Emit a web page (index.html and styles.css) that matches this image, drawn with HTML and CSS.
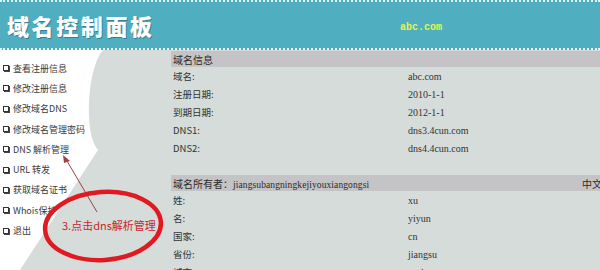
FILE: index.html
```html
<!DOCTYPE html>
<html lang="zh-CN">
<head>
    <meta charset="UTF-8">
    <title>域名控制面板</title>
    <link rel="stylesheet" href="styles.css">
</head>
<body>
    <div class="top">
        <h1>域名控制面板</h1>
        <span class="site">abc.com</span>
    </div>
    <div class="main">
        <div class="menu">
            <ul>
                <li><i class="box"></i>查看注册信息</li>
                <li><i class="box"></i>修改注册信息</li>
                <li><i class="box"></i>修改域名DNS</li>
                <li><i class="box"></i>修改域名管理密码</li>
                <li><i class="box"></i>DNS 解析管理</li>
                <li><i class="box"></i>URL 转发</li>
                <li><i class="box"></i>获取域名证书</li>
                <li><i class="box"></i>Whois保护</li>
                <li><i class="box"></i>退出</li>
            </ul>
        </div>
        <div class="content">
            <table>
                <tr class="bar"><td colspan="2">域名信息</td></tr>
                <tr><td class="label">域名:</td><td class="value">abc.com</td></tr>
                <tr><td class="label">注册日期:</td><td class="value">2010-1-1</td></tr>
                <tr><td class="label">到期日期:</td><td class="value">2012-1-1</td></tr>
                <tr><td class="label">DNS1:</td><td class="value">dns3.4cun.com</td></tr>
                <tr><td class="label">DNS2:</td><td class="value">dns4.4cun.com</td></tr>
                <tr><td colspan="2"></td></tr>
                <tr class="bar">
                    <td colspan="2">
                        <div class="bar-row">
                            <span>域名所有者：<span class="owner">jiangsubangningkejiyouxiangongsi</span></span>
                            <span>中文信息</span>
                        </div>
                    </td>
                </tr>
                <tr><td class="label">姓:</td><td class="value">xu</td></tr>
                <tr><td class="label">名:</td><td class="value">yiyun</td></tr>
                <tr><td class="label">国家:</td><td class="value">cn</td></tr>
                <tr><td class="label">省份:</td><td class="value">jiangsu</td></tr>
                <tr><td class="label">城市:</td><td class="value">suzhou</td></tr>
            </table>
        </div>

        <!-- hand drawn note over the page -->
        <svg class="note" width="200" height="220" viewBox="0 0 200 220">
            <line x1="97" y1="162" x2="67" y2="111" stroke="#9a4444" stroke-width="1"/>
            <polygon points="63,105 70,111 64,113" fill="#9a4444"/>
            <ellipse cx="103" cy="176" rx="58" ry="34" transform="rotate(-4 103 176)"
                     fill="none" stroke="#e01a22" stroke-width="4.5"/>
            <text x="62" y="180" class="note-text">3.点击dns解析管理</text>
        </svg>
    </div>
</body>
</html>
```

FILE: styles.css
```css
body {
    margin: 0;
    width: 600px;
    height: 270px;
    overflow: hidden;
    background-color: #d5dcd9;
    font-family: "Noto Sans CJK SC", "Liberation Sans", sans-serif;
    color: #333;
}
.top {
    height: 46px;
    background-color: #4faec0;
    border-top: 2px dotted #e6f3f5;
    border-bottom: 2px dotted #e6f3f5;
    display: flex;
    align-items: center;
}
.top h1 {
    margin: 0 0 0 7px;
    font-size: 22px;
    font-weight: 900;
    letter-spacing: 2.6px;
    color: #fff;
    text-shadow: 1px 1px 0 rgba(40, 80, 90, 0.5);
    line-height: 1;
    width: 393px;
}
.site {
    font-family: "Liberation Mono", monospace;
    font-size: 10px;
    font-weight: bold;
    color: #e4f25a;
    margin-top: 4px;
}
.main {
    display: flex;
    position: relative;
    height: 220px;
}
.menu {
    width: 168px;
    flex-shrink: 0;
    position: relative;
}
.menu::before {
    content: "";
    position: absolute;
    inset: 0;
    background-color: #fff;
    clip-path: path("M0 0 H103 C93 12 88 40 89 68 C90 84 93 94 98 100 L20 220 H0 Z");
}
.menu ul {
    position: relative;
    list-style: none;
    margin: 0;
    padding: 8px 0 0 3px;
}
.menu li {
    height: 20.3px;
    display: flex;
    align-items: center;
    font-size: 9px;
    color: #3a3a3a;
    white-space: nowrap;
}
.box {
    width: 4px;
    height: 4px;
    border: 1px solid #333;
    box-shadow: 1px 1px 0 #444;
    margin-right: 4px;
}
.content {
    padding: 1px 0 0 3px;
}
table {
    width: 455px;
    border-collapse: collapse;
}
td {
    padding: 0 0 0 2px;
    height: 18px;
    font-size: 9.5px;
    vertical-align: middle;
}
.bar td {
    background-color: #c4c3c6;
    height: 16px;
    font-size: 10px;
    color: #2a2a2a;
}
.bar + tr td {
    height: 18px;
}
.bar-row {
    display: flex;
    justify-content: space-between;
    padding-right: 4px;
}
.owner {
    font-family: "Liberation Serif", serif;
    font-size: 9.5px;
    letter-spacing: 0.1px;
}
.label {
    width: 233px;
}
.value {
    font-family: "Liberation Serif", serif;
    font-size: 10px;
    color: #333;
}
.note {
    position: absolute;
    left: 0;
    top: 0;
}
.note-text {
    font-family: "Noto Sans CJK SC", sans-serif;
    font-size: 11px;
    fill: #c8252c;
}
```
